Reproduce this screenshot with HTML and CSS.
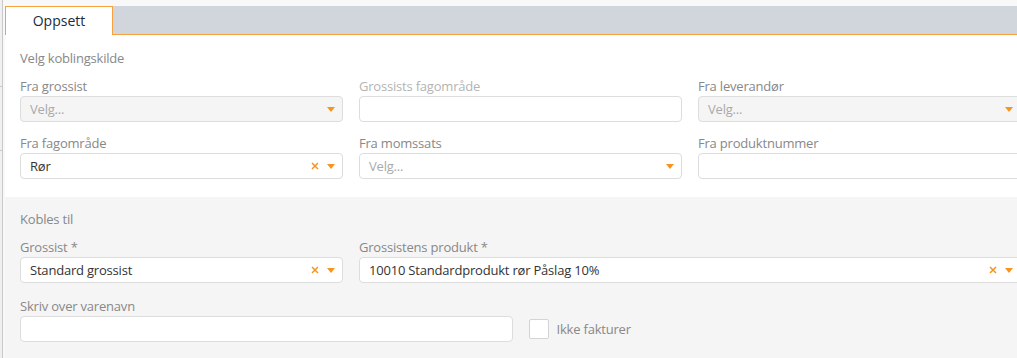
FILE: index.html
```html
<!DOCTYPE html>
<html lang="no">
<head>
<meta charset="utf-8">
<link rel="stylesheet" href="styles.css">
</head>
<body>
<div class="page">
  <div class="rail"><span class="tick t1"></span><span class="tick t2"></span></div>
  <div class="main">
    <div class="tabbar">
      <div class="tab">Oppsett</div>
    </div>
    <div class="section white">
      <div class="heading">Velg koblingskilde</div>
      <div class="grid">
        <div class="field c4">
          <label class="lbl">Fra grossist</label>
          <div class="ctl disabled"><span class="ph">Velg...</span><span class="icons"><svg class="arrow" width="8" height="5" viewBox="0 0 8 5"><polygon points="0,0 8,0 4,5"/></svg></span></div>
        </div>
        <div class="field c4">
          <label class="lbl dim">Grossists fagområde</label>
          <div class="ctl"></div>
        </div>
        <div class="field c4">
          <label class="lbl">Fra leverandør</label>
          <div class="ctl disabled"><span class="ph">Velg...</span><span class="icons"><svg class="arrow" width="8" height="5" viewBox="0 0 8 5"><polygon points="0,0 8,0 4,5"/></svg></span></div>
        </div>
        <div class="field c4">
          <label class="lbl">Fra fagområde</label>
          <div class="ctl"><span class="val">Rør</span><span class="icons"><svg class="clear" width="8" height="8" viewBox="0 0 8 8"><path d="M1 1L7 7M7 1L1 7"/></svg><svg class="arrow" width="8" height="5" viewBox="0 0 8 5"><polygon points="0,0 8,0 4,5"/></svg></span></div>
        </div>
        <div class="field c4">
          <label class="lbl">Fra momssats</label>
          <div class="ctl"><span class="ph">Velg...</span><span class="icons"><svg class="arrow" width="8" height="5" viewBox="0 0 8 5"><polygon points="0,0 8,0 4,5"/></svg></span></div>
        </div>
        <div class="field c4">
          <label class="lbl">Fra produktnummer</label>
          <div class="ctl"></div>
        </div>
      </div>
    </div>
    <div class="section gray">
      <div class="heading">Kobles til</div>
      <div class="grid wide">
        <div class="field c4">
          <label class="lbl">Grossist *</label>
          <div class="ctl"><span class="val">Standard grossist</span><span class="icons"><svg class="clear" width="8" height="8" viewBox="0 0 8 8"><path d="M1 1L7 7M7 1L1 7"/></svg><svg class="arrow" width="8" height="5" viewBox="0 0 8 5"><polygon points="0,0 8,0 4,5"/></svg></span></div>
        </div>
        <div class="field c8">
          <label class="lbl">Grossistens produkt *</label>
          <div class="ctl"><span class="val">10010 Standardprodukt rør Påslag 10%</span><span class="icons"><svg class="clear" width="8" height="8" viewBox="0 0 8 8"><path d="M1 1L7 7M7 1L1 7"/></svg><svg class="arrow" width="8" height="5" viewBox="0 0 8 5"><polygon points="0,0 8,0 4,5"/></svg></span></div>
        </div>
        <div class="field c6">
          <label class="lbl">Skriv over varenavn</label>
          <div class="ctl"></div>
        </div>
        <div class="field c6 checkfield">
          <label class="check"><span class="box"></span><span class="checktext">Ikke fakturer</span></label>
        </div>
      </div>
    </div>
  </div>
</div>
</body>
</html>
```

FILE: styles.css
```css
html, body {
  margin: 0;
  padding: 0;
  background: #f8f8f8;
  overflow: hidden;
}
body {
  font-family: "Open Sans", "Liberation Sans", sans-serif;
  font-size: 13px;
  letter-spacing: -0.2px;
  color: #333;
  width: 1017px;
  height: 358px;
}
.page {
  display: flex;
  height: 358px;
}
.rail {
  width: 2px;
  flex: none;
  background: #f0f0f0;
  border-right: 1px solid #c9c9c9;
  position: relative;
}
.tick {
  position: absolute;
  left: 0;
  width: 2px;
  height: 1px;
  background: #c9c9c9;
}
.t1 { top: 86px; }
.t2 { top: 150px; }
.main {
  margin-left: 2px;
  width: 1031px;
  flex: none;
  padding-top: 6px;
  display: flex;
  flex-direction: column;
}
.tabbar {
  height: 28px;
  background: #d0d6dc;
  border-bottom: 1px solid #f7a040;
  display: flex;
}
.tab {
  width: 106px;
  height: 28px;
  background: #fff;
  border: 1px solid #f7a040;
  border-bottom: none;
  margin-bottom: -1px;
  font-size: 14px;
  letter-spacing: 0;
  color: #1c2b3b;
  line-height: 28px;
  text-align: center;
  box-sizing: content-box;
  padding-bottom: 1px;
}
.section {
  padding: 14px 15px 18px 15px;
}
.white {
  background: #fff;
}
.gray {
  background: #f5f5f5;
  flex: 1;
  padding-top: 13px;
}
.heading {
  line-height: 18px;
  color: #888;
  margin-bottom: 10px;
}
.grid {
  display: grid;
  grid-template-columns: repeat(12, 1fr);
  column-gap: 16px;
  row-gap: 12px;
  width: 1001px;
}
.grid.wide {
  row-gap: 14px;
}
.c4 { grid-column: span 4; }
.c6 { grid-column: span 6; }
.c8 { grid-column: span 8; }
.lbl {
  display: block;
  line-height: 18px;
  color: #888;
  margin-bottom: 1px;
}
.lbl.dim {
  color: #b4b4b4;
}
.ctl {
  height: 26px;
  box-sizing: border-box;
  border: 1px solid #ddd;
  border-radius: 4px;
  background: #fff;
  display: flex;
  align-items: center;
  padding: 0 7px 0 9px;
}
.ctl.disabled {
  background: #f5f5f5;
}
.ph {
  color: #aaa;
  flex: 1;
}
.val {
  color: #333;
  flex: 1;
}
.icons {
  display: flex;
  align-items: center;
  gap: 8px;
  margin-left: auto;
}
.arrow {
  fill: #f7941d;
  display: block;
}
.clear {
  stroke: #f7941d;
  stroke-width: 1.5;
  display: block;
}
.checkfield {
  display: flex;
  align-items: flex-end;
}
.check {
  display: flex;
  align-items: center;
  height: 26px;
  gap: 8px;
}
.box {
  width: 18px;
  height: 18px;
  border: 1px solid #d4d4d4;
  border-radius: 2px;
  background: #fff;
}
.checktext {
  color: #888;
}
```
